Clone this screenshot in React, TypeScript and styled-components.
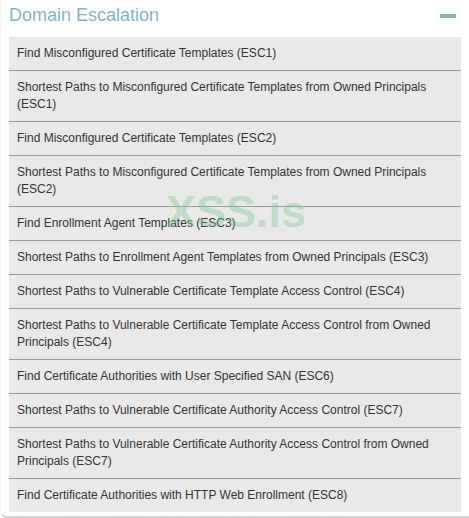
import React from "react";
import styled, { createGlobalStyle } from "styled-components";

const GlobalStyle = createGlobalStyle`
  html, body {
    margin: 0;
    padding: 0;
    background: #ffffff;
    font-family: "Liberation Sans", Arial, sans-serif;
  }
`;

const queries: string[] = [
  "Find Misconfigured Certificate Templates (ESC1)",
  "Shortest Paths to Misconfigured Certificate Templates from Owned Principals (ESC1)",
  "Find Misconfigured Certificate Templates (ESC2)",
  "Shortest Paths to Misconfigured Certificate Templates from Owned Principals (ESC2)",
  "Find Enrollment Agent Templates (ESC3)",
  "Shortest Paths to Enrollment Agent Templates from Owned Principals (ESC3)",
  "Shortest Paths to Vulnerable Certificate Template Access Control (ESC4)",
  "Shortest Paths to Vulnerable Certificate Template Access Control from Owned Principals (ESC4)",
  "Find Certificate Authorities with User Specified SAN (ESC6)",
  "Shortest Paths to Vulnerable Certificate Authority Access Control (ESC7)",
  "Shortest Paths to Vulnerable Certificate Authority Access Control from Owned Principals (ESC7)",
  "Find Certificate Authorities with HTTP Web Enrollment (ESC8)",
];

const App: React.FC = () => {
  return (
    <>
      <GlobalStyle />
      <Panel>
        <Header>
          <Title>Domain Escalation</Title>
          <Collapse aria-label="collapse" />
        </Header>
        <QueryList>
          {queries.map((q) => (
            <QueryItem key={q}>{q}</QueryItem>
          ))}
        </QueryList>
        <Watermark>XSS.is</Watermark>
      </Panel>
    </>
  );
};

export default App;

const Panel = styled.div`
  position: relative;
  box-sizing: border-box;
  width: 469px;
  height: 518px;
  padding: 0 8px 0 8px;
  border-bottom: 2px solid #d4d4d4;
  border-left: 1px solid #f2f2f2;
  border-bottom-left-radius: 7px;
  background: #fff;
  overflow: hidden;
`;

const Header = styled.div`
  height: 37px;
  display: flex;
  align-items: center;
  justify-content: space-between;
  padding-right: 5px;
`;

const Title = styled.h3`
  margin: -6px 0 0 0;
  font-size: 18px;
  font-weight: normal;
  color: #7fb4cf;
`;

const Collapse = styled.span`
  display: block;
  width: 16px;
  height: 4px;
  margin-top: -6px;
  background: #8ab3ca;
`;

const QueryList = styled.ul`
  list-style: none;
  margin: 0;
  padding: 0;
  background: #e9e9e9;
`;

const QueryItem = styled.li`
  padding: 8px 8px;
  font-size: 12px;
  line-height: 17px;
  color: #333;
  border-bottom: 1px solid #9c9c9c;
  &:last-child {
    border-bottom: none;
  }
`;

const Watermark = styled.div`
  position: absolute;
  left: 165px;
  top: 186px;
  font-size: 45px;
  font-weight: bold;
  color: rgba(120, 200, 140, 0.4);
  pointer-events: none;
`;
